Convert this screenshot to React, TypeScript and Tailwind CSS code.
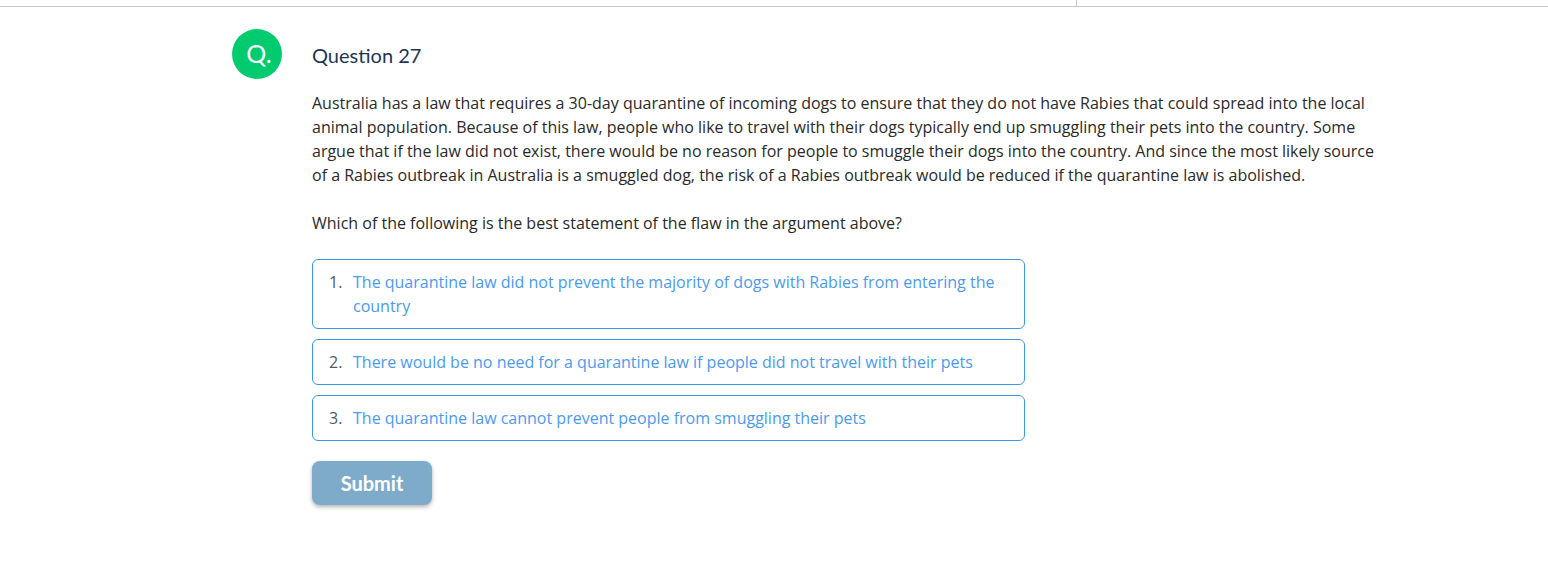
import React from "react";

const options = [
  "The quarantine law did not prevent the majority of dogs with Rabies from entering the country",
  "There would be no need for a quarantine law if people did not travel with their pets",
  "The quarantine law cannot prevent people from smuggling their pets",
];

export default function App() {
  return (
    <div className="min-h-[578px] w-full bg-white">
      <div className="flex h-[7px] border-b border-[#c8c8c8]">
        <div className="w-[1077px] border-r border-[#c8c8c8]" />
      </div>
      <div className="flex pl-[232px] pt-[22px]">
        <div
          className="flex h-[50px] w-[50px] shrink-0 items-center justify-center rounded-full bg-[#00cc6f] text-[25px] text-white"
          style={{ fontFamily: "Lato, sans-serif" }}
        >
          <span className="ml-[4px]">Q.</span>
        </div>
        <div className="ml-[30px] w-[1070px]">
          <div
            className="mt-[14px] text-[20px] leading-[24px] text-[#1d3557]"
            style={{ fontFamily: "Lato, sans-serif" }}
          >
            Question 27
          </div>
          <div
            className="mt-[24px] text-[16px] leading-[24px] text-[#2a2a2a]"
            style={{ fontFamily: "'Open Sans', sans-serif" }}
          >
            <p className="pr-[6px]">
              Australia has a law that requires a 30-day quarantine of incoming dogs to ensure that they do not have Rabies that could spread into the local animal population. Because of this law, people who like to travel with their dogs typically end up smuggling their pets into the country. Some argue that if the law did not exist, there would be no reason for people to smuggle their dogs into the country. And since the most likely source of a Rabies outbreak in Australia is a smuggled dog, the risk of a Rabies outbreak would be reduced if the quarantine law is abolished.
            </p>
            <p className="mt-[24px]">Which of the following is the best statement of the flaw in the argument above?</p>
          </div>
          <div
            className="mt-[24px] flex w-[713px] flex-col gap-[10px]"
            style={{ fontFamily: "'Open Sans', sans-serif" }}
          >
            {options.map((o, i) => (
              <div
                key={i}
                className="flex rounded-[6px] border border-[#3b97ec] px-[16px] py-[10px] text-[16px] leading-[24px]"
              >
                <span className="w-[24px] shrink-0 text-[#505a64]">{i + 1}.</span>
                <span className="text-[#4a9af0]">{o}</span>
              </div>
            ))}
          </div>
          <button
            className="mt-[20px] h-[44px] w-[120px] rounded-[8px] bg-[#7eabc9] text-[20px] font-bold text-white shadow-[0_2px_4px_rgba(0,0,0,0.3)]"
            style={{ fontFamily: "Lato, sans-serif" }}
          >
            Submit
          </button>
        </div>
      </div>
    </div>
  );
}
